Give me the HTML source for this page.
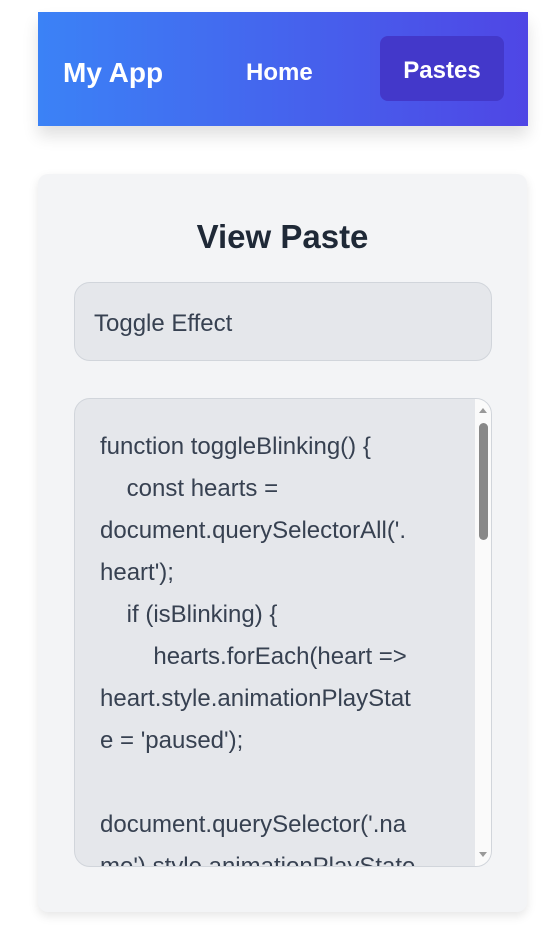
<!DOCTYPE html>
<html><head><meta charset="utf-8"><style>
*{box-sizing:border-box;margin:0;padding:0}
body{width:551px;height:942px;background:#fff;font-family:"Liberation Sans",sans-serif;position:relative;overflow:hidden}
.nav{position:absolute;left:38px;top:12px;width:490px;height:114px;background:linear-gradient(90deg,#3b82f6,#4f46e5);box-shadow:0 10px 15px rgba(0,0,0,0.12)}
.nav span{position:absolute;color:#fff;font-weight:bold;top:4px;line-height:114px}
.brand{left:25px;font-size:28px}
.home{left:208px;font-size:24px}
.pastes{position:absolute;left:342px;top:24px;width:124px;height:65px;background:#4338ca;border-radius:8px;color:#fff;font-weight:bold;font-size:24px;text-align:center;line-height:70px}
.card{position:absolute;left:38px;top:174px;width:489px;height:738px;background:#f3f4f6;border-radius:10px;box-shadow:0 4px 10px rgba(0,0,0,0.1)}
h1{position:absolute;top:214px;left:38px;width:489px;text-align:center;font-size:33px;color:#1f2937;font-weight:bold;line-height:46px}
.inp{position:absolute;left:74px;top:282px;width:418px;height:79px;background:#e5e7eb;border:1px solid #d1d5db;border-radius:16px;font-size:24px;color:#374151;padding-left:19px;line-height:81px}
.ta{position:absolute;left:74px;top:398px;width:418px;height:469px;background:#e5e7eb;border:1px solid #d1d5db;border-radius:16px;overflow:hidden}
.code{position:absolute;left:25px;top:27px;font-size:24px;line-height:42px;color:#374151;white-space:pre}
.sb{position:absolute;right:0;top:0;width:16px;height:100%;background:#fafafa}
.th{position:absolute;left:4px;top:24px;width:9px;height:117px;background:#888;border-radius:5px}
.up{position:absolute;left:4px;top:9px;border-left:4px solid transparent;border-right:4px solid transparent;border-bottom:5px solid #999}
.dn{position:absolute;left:4px;bottom:9px;border-left:4px solid transparent;border-right:4px solid transparent;border-top:5px solid #999}
</style></head><body>
<div class="nav"><span class="brand">My App</span><span class="home">Home</span><div class="pastes">Pastes</div></div>
<div class="card"></div>
<h1>View Paste</h1>
<div class="inp">Toggle Effect</div>
<div class="ta"><div class="code">function toggleBlinking() {
    const hearts =
document.querySelectorAll('.
heart');
    if (isBlinking) {
        hearts.forEach(heart =&gt;
heart.style.animationPlayStat
e = 'paused');

document.querySelector('.na
me').style.animationPlayState</div>
<div class="sb"><div class="up"></div><div class="th"></div><div class="dn"></div></div></div>
</body></html>
